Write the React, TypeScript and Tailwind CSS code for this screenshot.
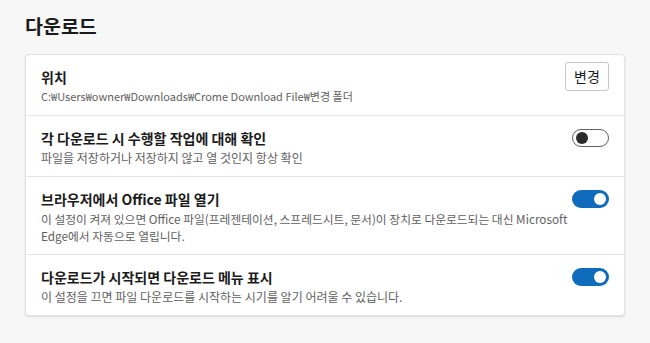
import React, { useState } from 'react';

const font = { fontFamily: '"Noto Sans CJK KR", "Noto Sans", sans-serif' };

const Toggle: React.FC<{ on: boolean; onChange: () => void }> = ({ on, onChange }) => (
  <button
    onClick={onChange}
    className={`mt-[1px] flex h-[18px] w-[37px] shrink-0 items-center rounded-full px-[3px] ${
      on ? 'justify-end bg-[#0f6cbd]' : 'justify-start border border-[#616161] bg-white'
    }`}
  >
    <span className={`h-[12px] w-[12px] rounded-full ${on ? 'bg-white' : 'bg-[#2b2b2b]'}`} />
  </button>
);

const App: React.FC = () => {
  const [ask, setAsk] = useState(false);
  const [office, setOffice] = useState(true);
  const [menu, setMenu] = useState(true);

  const rows = [
    {
      title: '각 다운로드 시 수행할 작업에 대해 확인',
      desc: <>파일을 저장하거나 저장하지 않고 열 것인지 항상 확인</>,
      size: 'text-[12px]',
      on: ask,
      toggle: () => setAsk(!ask),
    },
    {
      title: '브라우저에서 Office 파일 열기',
      desc: (
        <>
          이 설정이 켜져 있으면 Office 파일(프레젠테이션, 스프레드시트, 문서)이 장치로 다운로드되는 대신 Microsoft
          <br />
          Edge에서 자동으로 열립니다.
        </>
      ),
      size: 'text-[11.75px]',
      on: office,
      toggle: () => setOffice(!office),
    },
    {
      title: '다운로드가 시작되면 다운로드 메뉴 표시',
      desc: <>이 설정을 끄면 파일 다운로드를 시작하는 시기를 알기 어려울 수 있습니다.</>,
      size: 'text-[12px]',
      on: menu,
      toggle: () => setMenu(!menu),
    },
  ];

  return (
    <div className="min-h-screen bg-[#f7f7f7] px-[25px] pt-[14px]" style={font}>
      <h1 className="mb-[16px] text-[19.5px] font-bold leading-[24px] text-[#1b1b1b]">다운로드</h1>

      <div className="rounded-[4px] border border-[#e3e3e3] bg-white shadow-[0_1px_2px_rgba(0,0,0,0.12)]">
        <div className="flex items-start justify-between px-[15px] pb-[10px] pt-[12px]">
          <div>
            <div className="text-[14px] font-bold leading-[20px] text-[#1b1b1b]">위치</div>
            <div className="mt-[1px] text-[11px] leading-[17px] text-[#5f5f5f]">
              C:₩Users₩owner₩Downloads₩Crome Download File₩변경 폴더
            </div>
          </div>
          <button className="mt-[-5px] h-[29px] w-[44px] rounded-[3px] border border-[#c6c6c6] bg-white text-[14px] text-[#1b1b1b]">
            변경
          </button>
        </div>

        {rows.map((row) => (
          <div
            key={row.title}
            className="flex items-start justify-between border-t border-[#e5e5e5] px-[15px] pb-[10px] pt-[12px]"
          >
            <div className="min-w-0 flex-1">
              <div className="text-[14px] font-bold leading-[20px] text-[#1b1b1b]">{row.title}</div>
              <div className={`mt-[1px] whitespace-nowrap leading-[17px] text-[#5f5f5f] ${row.size}`}>{row.desc}</div>
            </div>
            <Toggle on={row.on} onChange={row.toggle} />
          </div>
        ))}
      </div>
    </div>
  );
};

export default App;
